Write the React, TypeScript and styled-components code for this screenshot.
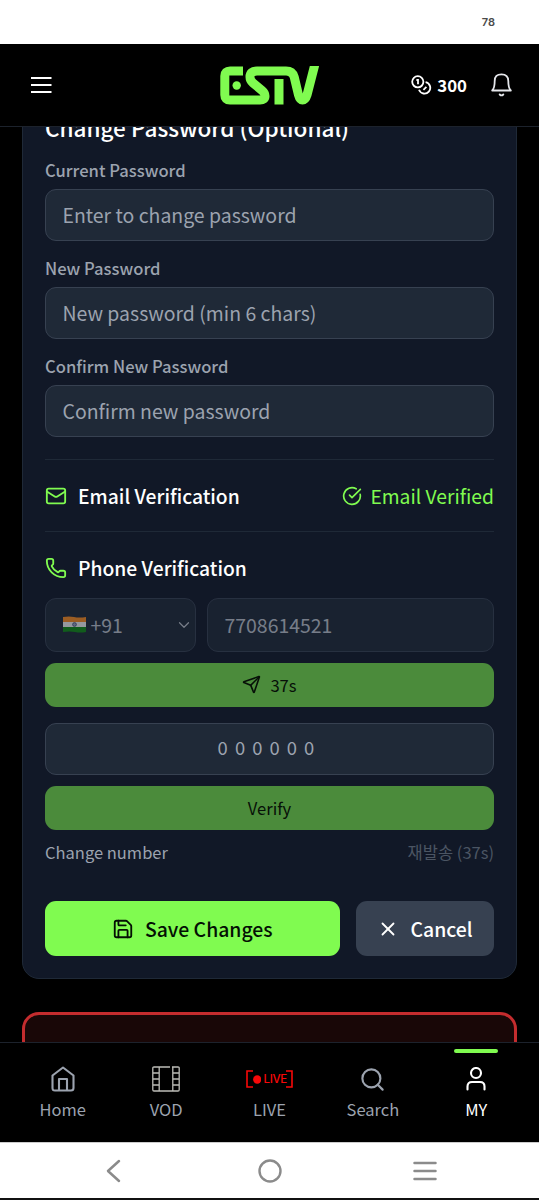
import React from "react";
import styled, { createGlobalStyle } from "styled-components";
import { CircleCheckBig, Mail, Phone, Save, Search, Send, X, ChevronDown } from "lucide-react";

const GREEN = "#80fb50";

const GlobalStyle = createGlobalStyle`
  * { box-sizing: border-box; }
  body { margin: 0; background: #000; }
  svg { display: block; flex: none; }
`;

const Screen = styled.div`
  width: 539px;
  height: 1200px;
  display: flex;
  flex-direction: column;
  overflow: hidden;
  background: #000;
  font-family: "Noto Sans CJK KR", "Noto Sans", sans-serif;
  color: #fff;
  white-space: nowrap;
`;

const StatusBar = styled.div`
  flex: none;
  height: 44px;
  padding: 0 44px 0 0;
  display: flex;
  justify-content: flex-end;
  align-items: center;
  background: #fff;
  color: #4a4a4a;
  font: 600 11px/44px Inter, sans-serif;
`;

const Header = styled.header`
  flex: none;
  height: 83px;
  padding: 0 27px 0 30px;
  display: grid;
  grid-template-columns: 190px 100px 1fr;
  align-items: center;
  border-bottom: 1px solid #1c222c;
`;

const HeaderActions = styled.div`
  display: flex;
  align-items: center;
  justify-content: flex-end;
`;

const Points = styled.span`
  margin: 0 24px 0 5px;
  font-size: 16.8px;
  font-weight: 700;
  line-height: 26px;
`;

const Content = styled.main`
  flex: none;
  height: 915px;
  overflow: hidden;
  padding: 0 22px;
`;

const Card = styled.section`
  height: 872px;
  margin-top: -20px;
  padding: 0 22px;
  background: #111827;
  border: 1px solid #1f2937;
  border-radius: 17px;
  display: flex;
  flex-direction: column;
`;

const CardTitle = styled.h2`
  margin: 3px 0 15px;
  font-size: 22.5px;
  font-weight: 500;
  line-height: 32px;
`;

const Label = styled.label`
  height: 25px;
  margin-bottom: 6px;
  font-size: 16.6px;
  font-weight: 500;
  line-height: 25px;
  color: #9ca3af;
`;

const Field = styled.div<{ $dim?: boolean; $code?: boolean }>`
  flex: none;
  height: ${(p) => (p.$dim ? 54 : 52)}px;
  padding: 0 16.5px ${(p) => (p.$code ? 4 : 1)}px;
  display: flex;
  align-items: center;
  justify-content: ${(p) => (p.$code ? "center" : "flex-start")};
  background: #1f2937;
  border: 1px solid #374151;
  border-radius: 11px;
  color: ${(p) => (p.$dim ? "#bcc1ca" : "#9ca3af")};
  font-size: ${(p) => (p.$code ? 18.4 : 19.45)}px;
  letter-spacing: ${(p) => (p.$code ? "7.1px" : "normal")};
  opacity: ${(p) => (p.$dim ? 0.6 : 1)};
`;

const FieldGroup = styled.div`
  display: flex;
  flex-direction: column;
  margin-bottom: 15px;
`;

const CodeGroup = styled.div`
  display: flex;
  flex-direction: column;
  margin: 16px 0 11px;
`;

const Divider = styled.hr<{ $spaced?: boolean }>`
  flex: none;
  width: 100%;
  height: 1px;
  margin: ${(p) => (p.$spaced ? "7px" : "0")} 0 0;
  border: 0;
  background: #1f2937;
`;

const VerifyRow = styled.div`
  height: 71px;
  display: flex;
  align-items: center;
  justify-content: space-between;
`;

const RowTitle = styled.div`
  display: flex;
  align-items: center;
  gap: 11px;
  font-size: 19.3px;
  font-weight: 500;
  svg { color: ${GREEN}; }
`;

const Verified = styled.div`
  display: flex;
  align-items: center;
  gap: 8px;
  color: ${GREEN};
  font-size: 19.3px;
`;

const PhoneRow = styled.div`
  display: grid;
  grid-template-columns: 151px 1fr;
  gap: 11px;
  margin: -5px 0 11px;
`;

const Country = styled(Field)`
  padding-right: 2px;
  svg:last-child { margin-left: auto; }
`;

const DialCode = styled.span`
  margin-left: 5px;
`;

const WideButton = styled.button`
  flex: none;
  height: 44px;
  padding: 0 0 1px;
  border: 0;
  border-radius: 11px;
  display: flex;
  align-items: center;
  justify-content: center;
  gap: 9px;
  background: #4b8b3b;
  color: #071008;
  font: 400 16.6px "Noto Sans CJK KR", sans-serif;
`;

const ResendRow = styled.div`
  display: flex;
  justify-content: space-between;
  height: 26px;
  margin: 9px 0 36px;
  font-size: 16.5px;
  line-height: 26px;
  color: #9ca3af;
`;

const Muted = styled.span`
  color: #4b5563;
`;

const Actions = styled.div`
  display: grid;
  grid-template-columns: 294.5px 1fr;
  gap: 16.5px;
`;

const ActionButton = styled.button<{ $primary?: boolean }>`
  height: 55px;
  padding: 0;
  border: 0;
  border-radius: 11px;
  display: flex;
  align-items: center;
  justify-content: center;
  gap: 11px;
  background: ${(p) => (p.$primary ? GREEN : "#374151")};
  color: ${(p) => (p.$primary ? "#041004" : "#fff")};
  font: 500 19.4px "Noto Sans CJK KR", sans-serif;
`;

const DangerCard = styled.section`
  height: 120px;
  margin-top: 33px;
  background: #190707;
  border: 3px solid #c42c2e;
  border-radius: 17px;
`;

const TabBar = styled.nav`
  flex: none;
  height: 100px;
  padding: 0 11px;
  display: grid;
  grid-template-columns: repeat(5, 1fr);
  border-top: 1px solid #1c222c;
`;

const Tab = styled.div<{ $active?: boolean }>`
  position: relative;
  display: flex;
  flex-direction: column;
  align-items: center;
  padding-top: 22px;
  font-size: 16.5px;
  line-height: 24px;
  color: ${(p) => (p.$active ? "#fff" : "#9ca3af")};
  &::before {
    content: "";
    display: ${(p) => (p.$active ? "block" : "none")};
    position: absolute;
    top: 6px;
    width: 44px;
    height: 4px;
    border-radius: 2px;
    background: ${GREEN};
  }
`;

const TabIcon = styled.div`
  height: 28px;
  margin-bottom: 4px;
  display: flex;
  align-items: center;
`;

const LiveBadge = styled.span`
  display: flex;
  align-items: center;
  color: #f80808;
  font: 500 11.5px/16px Inter, sans-serif;
  letter-spacing: -0.3px;
`;

const LiveText = styled.span`
  margin: 0 -1px 0 2px;
`;

const SystemBar = styled.div`
  flex: none;
  height: 58px;
  display: grid;
  grid-template-columns: 226px 87px 223px;
  align-items: center;
  justify-items: center;
  background: #fff;
  border-top: 1px solid #ccc;
  border-bottom: 2px solid #111;
`;

const Logo = () => (
  <svg width="100" height="39" viewBox="0 0 100 39" fill="none" stroke={GREEN} strokeWidth="9">
    <path d="M23 5H10Q4.8 5 4.8 10V29Q4.8 34 10 34H40Q45 34 45 30Q45 27 42 24.5L33 17Q30 14.5 30 11Q30 5 37 5H66Q72.5 5 74.2 11L78.5 29Q79.8 34 82.5 34Q85.5 34 87 29L95.5 -4" />
    <path d="M59 13V38.5" />
    <circle cx="16.7" cy="19.5" r="4.2" fill={GREEN} stroke="none" />
  </svg>
);

const MenuIcon = () => (
  <svg width="22" height="18" viewBox="0 0 22 18" stroke="#fff" strokeWidth="2.2">
    <path d="M1 2H21.5M1 9H21.5M1 16H21.5" />
  </svg>
);

const CoinsIcon = () => (
  <svg width="21" height="21" viewBox="0 0 21 21" fill="none" stroke="#fff" strokeWidth="1.8">
    <circle cx="6.8" cy="6.8" r="5.6" />
    <path d="M5.4 5H7V9.3M14.6 7.1A5.8 5.8 0 1 1 8 14.8M12.4 14.8L15.4 11.8" />
  </svg>
);

const IndiaFlag = () => (
  <svg width="23" height="17" viewBox="0 0 23 17">
    <path d="M0 1Q6 0 11 1T23 1V6H0Z" fill="#f88b22" />
    <path d="M0 6H23V11H0Z" fill="#eee" />
    <path d="M0 11H23V16Q17 17 12 16T0 16Z" fill="#118a16" />
    <circle cx="11.5" cy="8.5" r="1.9" fill="#9aa0b8" stroke="#333f70" strokeWidth=".7" />
  </svg>
);

const FilmIcon = () => (
  <svg width="28" height="26" viewBox="0 0 28 26" fill="none" stroke="#bdbdb8" strokeWidth="1.3">
    <path d="M18 1H2Q.8 1 .8 2.2V23.8Q.8 25 2 25H26Q27.2 25 27.2 23.8V2.2Q27.2 1 26 1H20M7.2 1V25M20.8 1V25M.8 7H7M.8 13H7M.8 19H7M20.8 7H27M20.8 13H27M20.8 19H27" />
  </svg>
);

const Bracket = ({ right = false }: { right?: boolean }) => (
  <svg width="7" height="18" viewBox="0 0 7 18" fill="none" stroke="#f80808" strokeWidth="1.6">
    <path d={right ? "M0 1H6V17H0" : "M7 1H1V17H7"} />
  </svg>
);

const LiveIcon = () => (
  <LiveBadge>
    <Bracket />
    <svg width="8.5" height="9" viewBox="0 0 9 9"><circle cx="4.5" cy="4.5" r="4.4" fill="#f80808" /></svg>
    <LiveText>LIVE</LiveText>
    <Bracket right />
  </LiveBadge>
);

const BackIcon = () => (
  <svg width="18" height="24" viewBox="0 0 18 24" fill="none" stroke="#8b8b8b" strokeWidth="2.5" strokeLinecap="round" strokeLinejoin="round">
    <path d="M15 2L4 12L15 22" />
  </svg>
);

const CircleIcon = () => (
  <svg width="24" height="24" viewBox="0 0 24 24" fill="none" stroke="#8b8b8b" strokeWidth="2.4">
    <circle cx="12" cy="12" r="10.5" />
  </svg>
);

const RecentsIcon = () => (
  <svg width="26" height="22" viewBox="0 0 26 22" stroke="#8b8b8b" strokeWidth="2.5" strokeLinecap="round">
    <path d="M2.5 3H23.5M2.5 11H23.5M2.5 19H23.5" />
  </svg>
);

const HomeIcon = () => (
  <svg width="24" height="26" viewBox="0 0 24 26" fill="none" stroke="#9ca3af" strokeWidth="2.1" strokeLinejoin="round">
    <path d="M1.5 9.5L12 1.5L22.5 9.5V22Q22.5 24.5 20 24.5H4Q1.5 24.5 1.5 22ZM8 24.5V13H16V24.5" />
  </svg>
);

const UserIcon = () => (
  <svg width="20" height="24" viewBox="0 0 20 24" fill="none" stroke="#fff" strokeWidth="2.1" strokeLinecap="round">
    <circle cx="10" cy="6" r="5" />
    <path d="M1.5 22.5V19.5Q1.5 15 6 15H14Q18.5 15 18.5 19.5V22.5" />
  </svg>
);

const BellIcon = () => (
  <svg width="21" height="24" viewBox="0 0 21 24" fill="none" stroke="#e5e7eb" strokeWidth="1.8" strokeLinecap="round" strokeLinejoin="round">
    <path d="M1.2 17.5Q3.7 15 3.7 8Q3.7 1.3 10.5 1.3T17.3 8Q17.3 15 19.8 17.5ZM8.7 21.5Q10.5 23.3 12.3 21.5" />
  </svg>
);

const passwordFields = [
  { label: "Current Password", placeholder: "Enter to change password" },
  { label: "New Password", placeholder: "New password (min 6 chars)" },
  { label: "Confirm New Password", placeholder: "Confirm new password" },
];

const tabs = [
  { label: "Home", icon: <HomeIcon /> },
  { label: "VOD", icon: <FilmIcon /> },
  { label: "LIVE", icon: <LiveIcon /> },
  { label: "Search", icon: <Search size={27} strokeWidth={1.9} /> },
  { label: "MY", icon: <UserIcon />, active: true },
];

export default function App() {
  return (
    <Screen>
      <GlobalStyle />
      <StatusBar>78</StatusBar>
      <Header>
        <MenuIcon />
        <Logo />
        <HeaderActions>
          <CoinsIcon />
          <Points>300</Points>
          <BellIcon />
        </HeaderActions>
      </Header>
      <Content>
        <Card>
          <CardTitle>Change Password (Optional)</CardTitle>
          {passwordFields.map((f) => (
            <FieldGroup key={f.label}>
              <Label>{f.label}</Label>
              <Field>{f.placeholder}</Field>
            </FieldGroup>
          ))}
          <Divider $spaced />
          <VerifyRow>
            <RowTitle><Mail size={22} strokeWidth={2} />Email Verification</RowTitle>
            <Verified><CircleCheckBig size={20} strokeWidth={2} />Email Verified</Verified>
          </VerifyRow>
          <Divider />
          <VerifyRow>
            <RowTitle><Phone size={22} strokeWidth={2} />Phone Verification</RowTitle>
          </VerifyRow>
          <PhoneRow>
            <Country $dim>
              <IndiaFlag />
              <DialCode>+91</DialCode>
              <ChevronDown size={18} strokeWidth={1.6} />
            </Country>
            <Field $dim>7708614521</Field>
          </PhoneRow>
          <WideButton><Send size={19} strokeWidth={2} />37s</WideButton>
          <CodeGroup>
            <Field $code>000000</Field>
          </CodeGroup>
          <WideButton>Verify</WideButton>
          <ResendRow>
            <span>Change number</span>
            <Muted>재발송 (37s)</Muted>
          </ResendRow>
          <Actions>
            <ActionButton $primary><Save size={22} />Save Changes</ActionButton>
            <ActionButton><X size={22} />Cancel</ActionButton>
          </Actions>
        </Card>
        <DangerCard />
      </Content>
      <TabBar>
        {tabs.map((t) => (
          <Tab key={t.label} $active={t.active}>
            <TabIcon>{t.icon}</TabIcon>
            {t.label}
          </Tab>
        ))}
      </TabBar>
      <SystemBar>
        <BackIcon />
        <CircleIcon />
        <RecentsIcon />
      </SystemBar>
    </Screen>
  );
}
